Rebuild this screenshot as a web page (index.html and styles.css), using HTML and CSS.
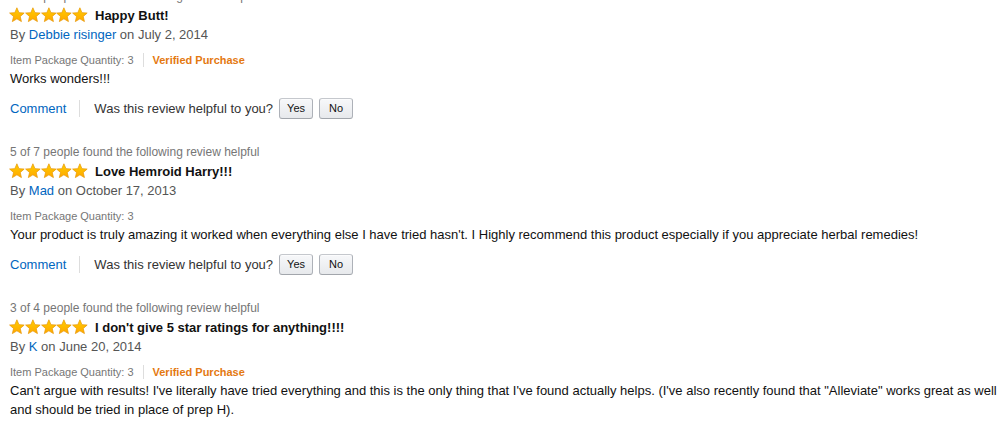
FILE: index.html
```html
<!DOCTYPE html>
<html>
<head>
<meta charset="utf-8">
<link rel="stylesheet" href="styles.css">
</head>
<body>
<svg width="0" height="0" class="defs">
  <defs>
    <linearGradient id="sg" x1="0" y1="0" x2="0" y2="1">
      <stop offset="0" stop-color="#ffce00"/>
      <stop offset="1" stop-color="#ffa700"/>
    </linearGradient>
    <symbol id="star" viewBox="0 0 16 16">
      <polygon points="8,0.8 10.1,5.7 15.4,6.1 11.4,9.6 12.6,14.8 8,12 3.4,14.8 4.6,9.6 0.6,6.1 5.9,5.7" fill="url(#sg)" stroke="#e69500" stroke-width="0.7" stroke-linejoin="round"/>
    </symbol>
  </defs>
</svg>
<div class="reviews">
  <div class="review">
    <div class="helpful">4 of 4 people found the following review helpful</div>
    <div class="title-row">
      <span class="stars"><svg><use href="#star"/></svg><svg><use href="#star"/></svg><svg><use href="#star"/></svg><svg><use href="#star"/></svg><svg><use href="#star"/></svg></span>
      <span class="title">Happy Butt!</span>
    </div>
    <div class="byline">By <a class="link">Debbie risinger</a> on July 2, 2014</div>
    <div class="meta"><span>Item Package Quantity: 3</span><span class="vsep"></span><span class="verified">Verified Purchase</span></div>
    <div class="body">Works wonders!!!</div>
    <div class="actions">
      <a class="link">Comment</a><span class="asep"></span><span class="ask">Was this review helpful to you?</span><button class="btn">Yes</button><button class="btn">No</button>
    </div>
  </div>
  <div class="review">
    <div class="helpful">5 of 7 people found the following review helpful</div>
    <div class="title-row">
      <span class="stars"><svg><use href="#star"/></svg><svg><use href="#star"/></svg><svg><use href="#star"/></svg><svg><use href="#star"/></svg><svg><use href="#star"/></svg></span>
      <span class="title">Love Hemroid Harry!!!</span>
    </div>
    <div class="byline">By <a class="link">Mad</a> on October 17, 2013</div>
    <div class="meta"><span>Item Package Quantity: 3</span></div>
    <div class="body">Your product is truly amazing it worked when everything else I have tried hasn't. I Highly recommend this product especially if you appreciate herbal remedies!</div>
    <div class="actions">
      <a class="link">Comment</a><span class="asep"></span><span class="ask">Was this review helpful to you?</span><button class="btn">Yes</button><button class="btn">No</button>
    </div>
  </div>
  <div class="review">
    <div class="helpful">3 of 4 people found the following review helpful</div>
    <div class="title-row">
      <span class="stars"><svg><use href="#star"/></svg><svg><use href="#star"/></svg><svg><use href="#star"/></svg><svg><use href="#star"/></svg><svg><use href="#star"/></svg></span>
      <span class="title">I don't give 5 star ratings for anything!!!!</span>
    </div>
    <div class="byline">By <a class="link">K</a> on June 20, 2014</div>
    <div class="meta"><span>Item Package Quantity: 3</span><span class="vsep"></span><span class="verified">Verified Purchase</span></div>
    <div class="body">Can't argue with results! I've literally have tried everything and this is the only thing that I've found actually helps. (I've also recently found that "Alleviate" works great as well and should be tried in place of prep H).</div>
  </div>
</div>
</body>
</html>
```
FILE: styles.css
```css
html, body {
  margin: 0;
  padding: 0;
  background: #fff;
  overflow: hidden;
}
body {
  font-family: "Liberation Sans", Arial, sans-serif;
  color: #111;
  font-size: 13px;
}
.defs {
  position: absolute;
  width: 0;
  height: 0;
}
.reviews {
  margin-top: -13px;
  padding-left: 10px;
  padding-right: 10px;
}
.review {
  padding-bottom: 24px;
}
.review:last-child {
  padding-bottom: 0;
}
.helpful {
  height: 18px;
  line-height: 18px;
  font-size: 12px;
  color: #767676;
}
.title-row {
  height: 20px;
  display: flex;
  align-items: center;
}
.stars {
  display: flex;
  width: 80px;
  margin-left: -1px;
  gap: 0;
}
.stars svg {
  width: 15.8px;
  height: 15.8px;
}
.title {
  font-weight: bold;
  font-size: 13px;
  margin-left: 6px;
  color: #111;
}
.byline {
  height: 20px;
  line-height: 20px;
  color: #555;
}
.link {
  color: #0066c0;
  text-decoration: none;
}
.meta {
  margin-top: 6px;
  height: 18px;
  line-height: 18px;
  font-size: 11px;
  color: #767676;
  display: flex;
  align-items: center;
}
.vsep {
  width: 1px;
  height: 14px;
  background: #ddd;
  margin: 0 9px 0 9px;
}
.verified {
  color: #e47911;
  font-weight: bold;
}
.body {
  line-height: 19px;
  min-height: 19px;
  color: #111;
}
.actions {
  margin-top: 9px;
  height: 22px;
  display: flex;
  align-items: center;
}
.asep {
  width: 1px;
  height: 17px;
  background: #ddd;
  margin: 0 14px 0 13px;
}
.ask {
  color: #333;
  margin-right: 6px;
}
.btn {
  font-family: "Liberation Sans", Arial, sans-serif;
  font-size: 11px;
  color: #111;
  height: 21px;
  width: 34px;
  padding: 0;
  margin: 0 6px 0 0;
  border: 1px solid #adb1b8;
  border-top-color: #c5c8cd;
  border-bottom-color: #a2a6ac;
  border-radius: 3px;
  background: linear-gradient(#f7f8fa, #e7e9ec);
  box-shadow: inset 0 1px 0 rgba(255,255,255,.6);
}
```
